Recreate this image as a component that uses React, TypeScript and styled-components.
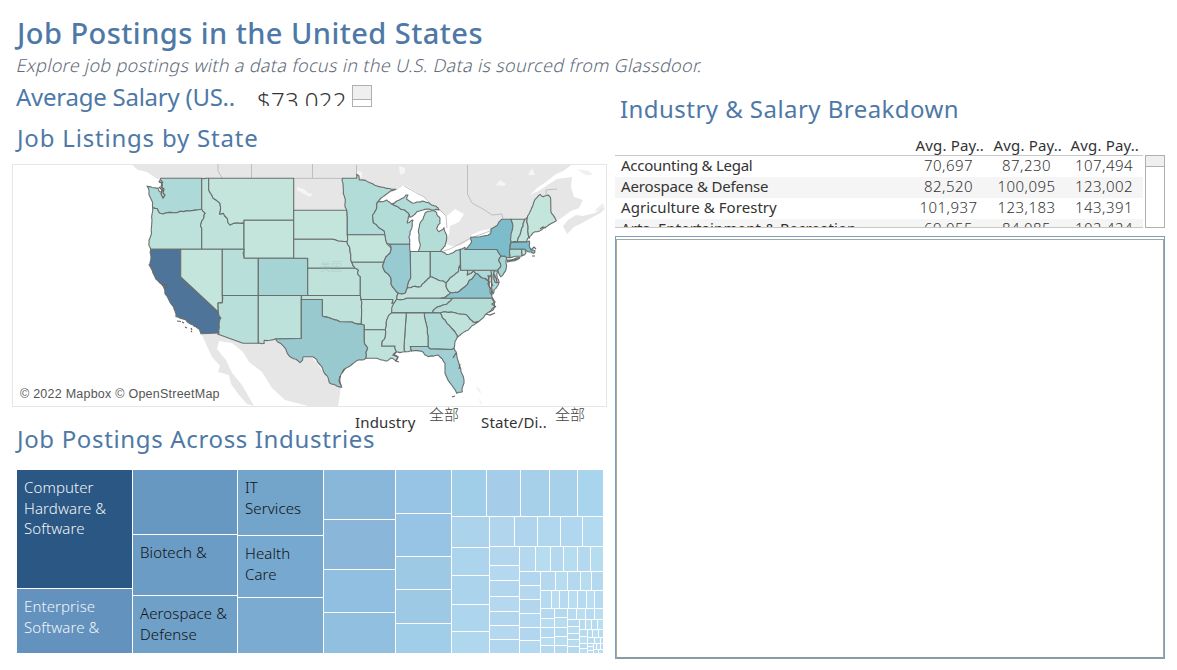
import React from "react";
import styled, { createGlobalStyle } from "styled-components";

const Global = createGlobalStyle`
  * { box-sizing: border-box; }
  body { margin: 0; background: #fff; overflow: hidden; font-family: "Noto Sans", "Noto Sans CJK SC", sans-serif; }
`;

const Page = styled.main`
  width: 1177px;
  height: 670px;
  overflow: hidden;
  background: #fff;
`;
const Columns = styled.div`
  display: grid;
  grid-template-columns: 595px 550px;
  column-gap: 8px;
  padding-left: 12px;
`;
const Header = styled.header`
  height: 81px;
  padding: 13px 0 0 17px;
`;
const PageTitle = styled.h1`
  margin: 0;
  font-size: 29px;
  line-height: 40px;
  font-weight: 500;
  letter-spacing: 0.45px;
  color: #4e79a7;
  white-space: nowrap;
`;
const Subtitle = styled.p`
  width: max-content;
  margin: 0;
  font-size: 18px;
  line-height: 24px;
  font-weight: 300;
  transform: skewX(-13deg);
  color: #5f6b78;
  letter-spacing: 0.32px;
  white-space: nowrap;
`;
const SectionTitle = styled.h2<{ $spacing?: number }>`
  margin: 0;
  font-size: 24px;
  line-height: 32px;
  font-weight: 450;
  letter-spacing: ${(p) => p.$spacing ?? 0.3}px;
  color: #4e79a7;
  white-space: nowrap;
`;
const Left = styled.section`
  display: flex;
  flex-direction: column;
`;
const SalaryRow = styled.div`
  display: flex;
  height: 41px;
  padding-left: 4px;
`;
const SalaryLabel = styled.div`
  width: 241px;
`;
const SalaryValue = styled.div`
  width: 95px;
  height: 25px;
  padding-top: 9px;
  overflow: hidden;
  font-size: 24px;
  line-height: 22px;
  font-weight: 300;
  letter-spacing: 0.3px;
  color: #333;
  white-space: nowrap;
`;
const ScrollSlot = styled.div`
  padding-top: 4px;
`;
const ScrollTrack = styled.div<{ $w: number; $h: number; $thumb: number }>`
  width: ${(p) => p.$w}px;
  height: ${(p) => p.$h}px;
  border: 1px solid #b0b0b0;
  &::before {
    content: "";
    display: block;
    height: ${(p) => p.$thumb}px;
    background: #efefef;
    border-bottom: 1px solid #b0b0b0;
  }
`;
const TitleSlot = styled.div<{ $h: number }>`
  height: ${(p) => p.$h}px;
  padding-left: 5px;
`;
const MapFrame = styled.div`
  position: relative;
  height: 243px;
  border: 1px solid #e6e6e6;
  svg { display: block; margin: -1px; }
`;
const Attribution = styled.div`
  position: absolute;
  left: 3px;
  bottom: 3px;
  padding: 0 4px;
  font: 12.5px/17px "Liberation Sans", sans-serif;
  color: #555;
  letter-spacing: 0.24px;
  background: rgba(255, 255, 255, 0.75);
`;
const Filters = styled.div`
  display: flex;
  height: 32px;
  margin-bottom: -16px;
  padding-left: 343px;
  color: #333;
`;
const FilterName = styled.div<{ $w: number }>`
  width: ${(p) => p.$w}px;
  padding-top: 4px;
  font-size: 15px;
  font-weight: 450;
  line-height: 22px;
  letter-spacing: 0.15px;
  white-space: nowrap;
`;
const FilterValue = styled.div`
  width: 51px;
  margin-left: -1px;
  padding-right: 1px;
  font: 300 15px/13px "Noto Sans CJK SC", sans-serif;
  color: #444;
  & + div { margin-left: 1px; }
`;
const TreeFrame = styled.div`
  display: flex;
  width: 586px;
  height: 183px;
  margin-left: 5px;
`;
const Split = styled.div<{ $dir: "row" | "column"; $size?: number }>`
  display: flex;
  flex-direction: ${(p) => p.$dir};
  gap: 1px;
  min-width: 0;
  min-height: 0;
  flex: ${(p) => (p.$size ? `0 0 ${p.$size}px` : "1 1 0")};
`;
const Cell = styled.div<{ $size: number; $color: string; $ink?: string }>`
  flex: 0 0 ${(p) => p.$size}px;
  min-width: 0;
  min-height: 0;
  overflow: hidden;
  background: ${(p) => p.$color};
  color: ${(p) => p.$ink ?? "#111"};
  font-size: 15px;
  font-weight: 350;
  line-height: 20.7px;
  letter-spacing: 0.1px;
  white-space: pre;
`;
const CellText = styled.div`
  padding: 7px 0 0 7px;
`;
const Right = styled.section`
  display: flex;
  flex-direction: column;
  padding-top: 12px;
`;
const Columned = styled.div`
  display: grid;
  grid-template-columns: 294px 78px 78px 77px;
`;
const TableHead = styled(Columned)`
  height: 30px;
  padding-top: 10px;
  font-size: 15px;
  font-weight: 450;
  line-height: 20px;
  letter-spacing: 0.15px;
  color: #333;
  text-align: right;
  span { padding-right: 3px; }
`;
const TableWrap = styled.div`
  display: flex;
  justify-content: space-between;
  height: 73px;
`;
const TableBody = styled.div`
  width: 528px;
  height: 73px;
  overflow: hidden;
  border-top: 1px solid #c8c8c8;
  border-bottom: 1px solid #c8c8c8;
`;
const TableRow = styled(Columned)<{ $band: boolean }>`
  height: 21px;
  font-size: 15px;
  line-height: 18px;
  color: #333;
  background: ${(p) => (p.$band ? "#f5f5f5" : "#fff")};
`;
const NameCell = styled.div<{ $spacing: number }>`
  padding-left: 6px;
  font-weight: 450;
  letter-spacing: ${(p) => p.$spacing}px;
  white-space: nowrap;
`;
const NumCell = styled.div`
  text-align: center;
  padding-left: 1px;
  font-weight: 300;
  letter-spacing: 0.45px;
`;
const EmptyPanel = styled.div`
  height: 423px;
  margin-top: 8px;
  border: 1px solid #76a0c4;
  border-bottom-width: 2px;
  border-bottom-color: #8a9ba5;
  padding: 2px 0 0 0;
  &::before {
    content: "";
    display: block;
    height: 418px;
    border: 1px solid #a9a79c;
    border-bottom: 0;
  }
`;

type Node = { s?: number; c?: string; t?: string; ink?: string; dir?: "row" | "column"; kids?: Node[] };
const cells = (sizes: number[], colors: string[]): Node[] =>
  sizes.map((s, i) => ({ s, c: colors[i % colors.length] }));
const row = (s: number | undefined, kids: Node[]): Node => ({ s, dir: "row", kids });
const col = (s: number | undefined, kids: Node[]): Node => ({ s, dir: "column", kids });
const A = ["#b1d6ee", "#b3d8ef"];
const B = ["#b4d9ef", "#b6dcf0"];
const C = ["#b6dbf1", "#b9def2"];

const tree: Node = row(undefined, [
  col(115, [
    { s: 118, c: "#2a5783", t: "Computer\nHardware &\nSoftware", ink: "#f2f5f8" },
    { s: 64, c: "#6292bd", t: "Enterprise\nSoftware &", ink: "#f2f5f8" },
  ]),
  col(104, [
    { s: 64, c: "#6798c2" },
    { s: 60, c: "#6b9cc5", t: "Biotech &" },
    { s: 57, c: "#6fa0c8", t: "Aerospace &\nDefense" },
  ]),
  col(85, [
    { s: 65, c: "#73a4ca", t: "IT\nServices" },
    { s: 61, c: "#77a8cf", t: "Health\nCare" },
    { s: 55, c: "#7babd1" },
  ]),
  col(71, [{ s: 49, c: "#88b7da" }, { s: 49, c: "#8ab6da" }, { s: 42, c: "#90bfe1" }, { s: 40, c: "#90bfe0" }]),
  col(55, [{ s: 43, c: "#97c4e4" }, { s: 42, c: "#97c4e4" }, { s: 32, c: "#9dc9e5" }, { s: 33, c: "#9ec9e4" }, { s: 29, c: "#a0cde8" }]),
  col(undefined, [
    row(46, [{ s: 34, c: "#a0cde8" }, { s: 33, c: "#a5cdea" }, { s: 28, c: "#a6d0ea" }, { s: 27, c: "#a7d0eb" }, { s: 25, c: "#a9d4ed" }]),
    row(undefined, [
      col(37, cells([30, 27, 28, 26, 21], ["#abd3ec", "#acd4ec", "#abd3ec", "#add5ed", "#afd7ee"])),
      col(undefined, [
        row(29, cells([24, 22, 22, 21, 20], ["#b0d5ec", "#afd5ee", "#b0d7ed", "#b0d7ef", "#b1d9ef"])),
        row(undefined, [
          col(29, cells([18, 14, 15, 14, 13, 13, 13], A)),
          col(undefined, [
            row(24, cells([15, 14, 12, 13, 12, 12], B)),
            row(undefined, [
              col(20, cells([13, 13, 13, 13, 12, 12], A)),
              col(undefined, [
                row(18, cells([14, 11, 12, 10, 11], B)),
                row(17, cells([10, 7, 8, 8, 8, 7, 8], C)),
                row(undefined, [
                  col(13, cells([9, 8, 9, 7, 7], B)),
                  col(12, cells([8, 9, 8, 8, 7], B)),
                  col(undefined, [
                    row(10, cells([8, 8, 8, 8], C)),
                    row(undefined, [
                      col(11, cells([6, 6, 5, 6, 6], B)),
                      col(undefined, [
                        row(9, cells([5, 5, 5, 5], C)),
                        row(undefined, [
                          col(7, cells([6, 6, 4, 4], C)),
                          col(undefined, [
                            row(7, cells([4, 5, 4], C)),
                            row(5, cells([6, 5, 2], C)),
                            row(undefined, [
                              col(5, cells([2, 3, 2], C)),
                              col(undefined, [row(5, cells([2, 3, 2], C)), row(3, cells([4, 4], C))]),
                            ]),
                          ]),
                        ]),
                      ]),
                    ]),
                  ]),
                ]),
              ]),
            ]),
          ]),
        ]),
      ]),
    ]),
  ]),
]);

function Tile({ node }: { node: Node }) {
  if (node.kids)
    return (
      <Split $dir={node.dir!} $size={node.s}>
        {node.kids.map((k, i) => (
          <Tile key={i} node={k} />
        ))}
      </Split>
    );
  return (
    <Cell $size={node.s!} $color={node.c!} $ink={node.ink}>
      {node.t && <CellText>{node.t}</CellText>}
    </Cell>
  );
}

type Pt = [number, number];
const parse = (s: string): Pt[] => s.trim().split(/\s+/).map((p) => p.split(",").map(Number) as Pt);
const hash = (n: number) => {
  const v = Math.sin(n * 12.9898) * 43758.5453;
  return v - Math.floor(v) - 0.5;
};

// Breaks short slanted edges into small steps so rivers and coasts look irregular.
// The offset depends only on the edge's midpoint, so neighbouring states agree.
function rough(a: Pt, b: Pt, depth: number): Pt[] {
  const dx = b[0] - a[0];
  const dy = b[1] - a[1];
  const len = Math.hypot(dx, dy);
  const straight = Math.abs(dx) < 0.4 || Math.abs(dy) < 0.7;
  if (!depth || len < 2.6 || len > 22 || (straight && len > 9)) return [b];
  const mx = (a[0] + b[0]) / 2;
  const my = (a[1] + b[1]) / 2;
  const k = Math.min(2.2, len * 0.24);
  const m: Pt = [mx + hash(mx * 3 + my * 7) * k, my + hash(mx * 5 + my * 11) * k];
  return [...rough(a, m, depth - 1), ...rough(m, b, depth - 1)];
}
function outline(s: string) {
  const pts = parse(s);
  const out: Pt[] = [pts[0]];
  pts.forEach((p, i) => out.push(...rough(p, pts[(i + 1) % pts.length], 2)));
  return "M" + out.map((p) => p[0].toFixed(1) + "," + p[1].toFixed(1)).join("L") + "Z";
}

const states: [string, string][] = [
  ["#add9d8", "160.7,178.3 201.7,178.3 201.7,209.3 186.7,210.7 173,212.7 163,214 160,213.3 157,208.5 152.7,207.7 151,199 149,195 147,186 152,187.5 158,188 160,192 163,190 162,184 159,181.5"],
  ["#bde1db", "152.7,207.7 157,208.5 160,213.3 163,214 173,212.7 186.7,210.7 201.7,209.3 205.3,213.3 203.3,219 200.5,226 201.7,228 201.7,249.3 150.7,249.3 149,243 150,238 152,220"],
  ["#bfe2da", "201.7,178.3 208.7,178.3 208.7,190 211.7,195 220,203.3 219.5,214 223.3,213.3 230,225 240,223.3 244,223.3 244,249.3 201.7,249.3 201.7,228 200.5,226 203.3,219 205.3,213.3 201.7,209.3"],
  ["#c3e5dc", "208.7,178.3 293.7,178.3 293.7,220.3 244,220.3 244,223.3 240,223.3 230,225 223.3,213.3 219.5,214 220,203.3 211.7,195 208.7,190"],
  ["#c4e5dc", "244,220.3 293.7,220.3 293.7,258.3 244,258.3"],
  ["#4e7499", "150.7,249.3 180.7,249.3 180.7,277 218.3,312 221,318 219,325 219,333 201,333.7 199,329 193,325 186,320 176,316.7 175,311 172,305 165,294 164,288 160,283 153,273 149,265 151,257"],
  ["#c3e5dc", "180.7,249.3 222.3,249.3 222.3,303 218,303 218.3,312 180.7,277"],
  ["#b8dfd9", "222.3,249.3 244,249.3 244,258.3 258.3,258.3 258.3,295.5 222.3,295.5"],
  ["#b8dfd9", "222.3,295.5 258.3,295.5 258.3,343.3 243,343.3 217.5,334 219,333 219,325 221,318 218.3,312 218,303 222.3,303"],
  ["#a6d3d4", "258.3,258.3 307.7,258.3 307.7,295.5 258.3,295.5"],
  ["#bde1db", "258.3,295.5 301.3,295.5 301.3,338.5 275.5,339 264.3,340.3 264.3,343.3 258.3,343.3"],
  ["#c4e5dc", "293.7,210.3 346.7,210.3 347.3,216.7 347.3,234.7 347,241.7 338,241 333,239.3 293.7,239.3"],
  ["#c1e3db", "293.7,239.3 333,239.3 338,241 347,241.7 350,251.7 351.7,262.3 355,268.3 307.7,268.3 307.7,258.3 293.7,258.3"],
  ["#bfe2da", "307.7,268.3 355,268.3 358.3,270 357.5,273 360.3,276.7 360.3,295.5 307.7,295.5"],
  ["#bfe2da", "301.3,295.5 360.3,295.5 361,299.5 361.7,310 361.3,324 352,322 340,321.7 330,318 322.3,316 322.3,299.5 301.3,299.5"],
  ["#98c9cf", "301.3,299.5 322.3,299.5 322.3,316 330,318 340,321.7 352,322 361.3,324 364.3,325 364.3,340 367.7,348.3 366,358.3 358.3,360 350,366 343,370.7 340.7,375 340,381.7 341.7,387.3 336.7,386 329.3,382.7 325,374 319.3,364 312.7,356.7 303.3,356.7 300,362.7 290,356.7 286,349.3 275.5,339 301.3,338.5"],
  ["#b2dcd8", "342.3,178.3 356.7,178.3 356.7,174.3 359,176 359.3,180 370,182.7 381.7,187.3 391.7,189.3 396,189.3 386.7,194 377.3,202.3 376.7,208.3 372.7,215 373.3,222.7 384,230.7 384.7,234.7 347.3,234.7 347.3,216.7 346.7,210.3 345,206.7 344.5,197 343.3,190"],
  ["#c3e5dc", "347.3,234.7 384.7,234.7 386.7,243.3 391.3,248.3 390,253.3 386,256.7 384,262.3 351.7,262.3 350,251.7 347,241.7"],
  ["#bbe0da", "351.7,262.3 384,262.3 382.7,266 385,271.7 391,278.3 391,284 398.3,293.3 396.7,299.3 394,303.3 391.7,303.3 392.7,299.5 361,299.5 360.3,295.5 360.3,276.7 357.5,273 358.3,270 355,268.3"],
  ["#c3e5dc", "361,299.5 392.7,299.5 391.7,303.3 394,303.3 391.7,312.7 386.7,320 385.3,329.7 364.3,329.7 364.3,325 361.3,324 361.7,310"],
  ["#bfe2da", "364.3,329.7 385.3,329.7 385,338 381.7,346 395,346 396.7,351.7 394,354 398,357 396,361 391,358 386.7,361 381,360 376.7,358.3 366,358.3 367.7,348.3 364.3,340"],
  ["#b2dcd8", "377.3,202.3 386.7,200 391.7,204 405,210 409.3,215 407.3,223 413,220 410,231.7 409.5,244.3 389.3,244.3 386.7,243.3 384.7,234.7 384,230.7 373.3,222.7 372.7,215 376.7,208.3"],
  ["#b2dcd8", "391.7,204 399.3,200 406,195 408,195 406.7,199.3 411.7,202.7 418,202 425,201.7 431.7,205 436,206 439,210 431.7,210 423,210 416.7,211.7 410,217.3 409.3,215 405,210"],
  ["#b4ddd8", "425,213 431.7,210.7 436.7,212.7 440,218.3 440,223.3 436.7,228.3 439,231.7 444,227.7 446.7,238.3 445,246 440.7,251.3 430,251.5 418.3,251.5 420,243.3 418.3,231.7 420,223.3 423,219.3"],
  ["#98cad1", "389.3,244.3 410,244.3 410.3,251.5 410.7,278.3 407.3,288 405,293.3 398.3,293.3 391,284 391,278.3 385,271.7 382.7,266 384,262.3 386,256.7 390,253.3 391.3,248.3"],
  ["#bbe0da", "410.3,251.5 430.3,251.5 430.3,276.7 425,281.7 420,286.7 413,286.5 407.3,288 410.7,278.3"],
  ["#b2dcd8", "430.3,251.5 441.7,251.5 446.7,254.5 453,252.7 460.3,249.3 460.3,265 458.3,271.7 451.7,276.7 446,282.7 438,280 430.3,276.7"],
  ["#c1e3db", "407.3,288 413,286.5 420,286.7 425,281.7 430.3,276.7 438,280 446,282.7 446,286 450.7,292.7 441,298.3 406.7,298.3 396.7,299.3 398.3,293.3 405,293.3"],
  ["#b8dfd9", "396.7,299.3 406.7,298.3 452.7,298.3 450,301.5 443,305 433,310.7 433,312.9 391.7,312.9 394,303.3"],
  ["#c1e3db", "446,282.7 451.7,276.7 458.3,271.7 460.3,265 460.7,270.3 467.3,270.3 467.3,275 473.3,271 475.7,273.3 470,280 465,286.7 460,290.7 453.3,292.7 450.7,292.7 446,286"],
  ["#8cc4cd", "441,298.3 450.7,292.7 453.3,292.7 460,290.7 465,286.7 470,280 475.7,273.3 478.3,274.3 485,278.3 489.3,281.7 490,291.7 492.7,298.3"],
  ["#add9d8", "467.3,270.3 494.3,270.3 495.3,282.3 499,282.3 496.7,287 493,294 491.5,284 490.5,275 488.5,280 485,278.3 478.3,274.3 475.7,273.3 473.3,271 467.3,275"],
  ["#bfe2da", "494.3,270.3 497.5,271 497,276 499,282.3 495.3,282.3"],
  ["#acd8d8", "460.3,249.3 465,247.3 465,249.5 496.7,249.5 501,255.7 498.7,260 501,266 497.7,270.3 460.7,270.3"],
  ["#a6d5d6", "501,255.7 506.7,257.7 506,263.3 505,271.7 500.7,276.7 497.7,270.3 501,266 498.7,260"],
  ["#7cbccb", "465,249.5 471.7,241.7 470.7,237.3 480,236.7 490,234 491,229 501.7,219.3 511,219.3 512.3,230 511,242.7 510,249.3 510,257.7 506.7,257.7 501,255.7 496.7,249.5"],
  ["#7cbccb", "507.3,260 520,257.5 513,261 507.5,262"],
  ["#bfe2da", "511,219.3 525,219.3 521.7,228.3 517.3,241.7 511.3,242.3 512.3,230"],
  ["#c3e5dc", "525,219.3 527.3,217.3 528.7,237.3 526.7,241.7 517.3,241.7 521.7,228.3"],
  ["#c3e5dc", "527.3,217.3 531,210 534,201.7 540,194.3 543.3,196.7 548.3,195 550.7,199.3 550.9,211.7 556.3,220.7 551.7,223.3 543.3,228.3 535,231.7 529.3,238.3 528.7,237.3"],
  ["#7cbccb", "511,242.5 526.7,241.9 529.3,241 529.3,245 531,250 535,250.7 534,253.3 528.3,251.7 524.3,249.3 510,249.3"],
  ["#b4ddd8", "510,249.3 521.7,249.3 521.7,256 510,257.7"],
  ["#bfe2da", "521.7,249.3 525,249.3 526,253 521.7,256"],
  ["#b4ddd8", "452.7,298.3 492.7,298.3 495,306.7 490,311.7 485,315 478.3,321.7 473.3,322.3 466.7,315 455,312.7 445,311.7 440,313 433,312.9 433,310.7 443,305 450,301.5"],
  ["#bfe2da", "440,313 445,311.7 455,312.7 466.7,315 473.3,322.3 478.3,321.7 468.3,330 457.3,337.3 453.3,330 445,320"],
  ["#b0dad8", "424.3,312.9 440,313 445,320 453.3,330 457.3,337.3 454,348.3 451.7,349.5 430,348.9 428,346.5 428.3,341 427.3,333.3"],
  ["#bfe2da", "406.3,312.9 424.3,312.9 427.3,333.3 428.3,341 428,346.5 410.3,346.5 411.7,351 405,351.7 404,346.7"],
  ["#c1e3db", "391.7,312.9 406.3,312.9 404,346.7 405,351.7 396.7,351.7 395,346 381.7,346 385,338 385.3,329.7 386.7,320"],
  ["#a0cfd4", "410.3,346.5 428,346.5 430,348.9 451.7,349.5 454,348.3 456.7,355 460.7,368.3 464,380 462.3,391.7 456.7,393.3 451.7,385 445,373.3 445,363.3 438.3,355 428.3,356.7 423.3,352.3 411.7,351"],
];

function UsMap() {
  return (
    <svg width="595" height="243" viewBox="12 164 595 243">
      <g fill="#e6e6e6">
        <path d="M131,164H573L563,171L556,174L546,182L537,188L530,195L540,190L549,184L557,179L572,177L571,187L574,197L583,200L579,208L571,211L560,219L551,223L480,255L340,210V178H165L157,179L147,172L138,170Z" />
        <path d="M293,177H350V212H293Z" />
        <path d="M563,226L568,220L576,215L583,216L595,213L604,207L602,212L593,217L582,223L574,227L567,234Z" />
        <path d="M577,169L589,171L593,175L585,175Z" opacity=".6" />
        <path d="M594,211L603,203L605,210Z" opacity=".7" />
        <path d="M201,333L218,334L243,343H264V340H276L286,350L291,357L300,363L304,357H312L325,374L330,383L341,387L338,407H312L285,400L272,388L262,372L249,362L243,352L232,343L219,341L217,349L226,360L232,373L242,385L250,399L254,406L247,404L239,395L231,384L229,375L218,372L220,366L212,357L206,344Z" />
        <path d="M476,386l3,2l3,6l-4,-3ZM478,397l4,6l-1,2Z" opacity=".5" />
      </g>
      <g fill="#fff">
        <path d="M379,202L387,194L397,190L404,185L417,192L429,201L430,204L418,203L411,204L405,199L398,200L391,203L386,200Z" />
        <path d="M413,211L423,209L439,209L428,213L423,221L419,231L421,243L416,252L411,251L409,244V232L412,220L409,225L408,223Z" />
        <path d="M431,208L440,211L447,216L455,209L464,214L459,222L450,226L449,235L445,238L443,230L438,233L437,228L441,222L439,216Z" />
        <path d="M441,252L449,247L461,245L472,238L471,242L464,249L452,255L445,255Z" />
        <path d="M471,235L480,231L490,229L489,234L480,238L472,238Z" />
        <path d="M297,187l7,2l4,4l5,1l-3,3l-6,-3l-7,-4ZM399,166l6,2v5l-5,2ZM496,185l4,-5l6,4l-2,2ZM528,175l4,-7l3,7ZM357,171l5,1v5l-4,1Z" opacity=".6" />
      </g>
      <g fill="none" stroke="#b5b5b5" strokeWidth=".8">
        <path d="M218,164V171L222,178M251.5,164V178M312.5,164V178M356.5,165V178M293,178.4H343M467.5,165V194L472,203L483,209L492,215L502,214L503,219M546,195V190L557,189M404,186L424,197L430,203M439,209L446,216L447,228M440,252L450,249L471,238L490,231L492,228" />
      </g>
      <g stroke="#6a6e6c" strokeWidth="1.1" strokeLinejoin="round">
        {states.map(([fill, pts], i) => (
          <path key={i} fill={fill} d={outline(pts)} />
        ))}
      </g>
      <text x="320" y="271" fontSize="11" fill="#8fb3ab" opacity=".4" fontFamily="Noto Sans CJK SC" fontWeight="300">美国</text>
      <g fill="none" stroke="#666" strokeWidth="1.2">
        <path d="M159,182l3,1l-1,4l3,2l-1,4l2,2l-2,3l-2,-4l1,-4l-3,-3M161,180l2,3M177,321l4,0.5M182,322l2,1M185,327l2,1M191,328l1,2M191,331l1,1M488,275l1,5l-1,4l3,5l1,6M491,271l1,6l-1,5l2,4M494,274l2,4l1,4M492,299l3,3l-3,2l4,3M489,312l4,-2l2,-4M486,314l4,1l5,-2M396,352l-3,3l5,2l-2,4l3,1M340,376l-1,5l2,4M345,369l-3,4M456,353l-3,5M460,364l-1,5M452,397l3,-1M162,285l4,-1l1,3l-3,1M531,250l3,-3l2,2M532,256l3,0M508,261l9,-2M540,229l3,-2l3,1" />
      </g>
    </svg>
  );
}

const rows: { name: string; spacing: number; pay: string[] }[] = [
  { name: "Accounting & Legal", spacing: -0.25, pay: ["70,697", "87,230", "107,494"] },
  { name: "Aerospace & Defense", spacing: -0.15, pay: ["82,520", "100,095", "123,002"] },
  { name: "Agriculture & Forestry", spacing: 0.05, pay: ["101,937", "123,183", "143,391"] },
  { name: "Arts, Entertainment & Recreation", spacing: 0.1, pay: ["69,055", "84,085", "102,424"] },
];

export default function App() {
  return (
    <Page>
      <Global />
      <Header>
        <PageTitle>Job Postings in the United States</PageTitle>
        <Subtitle>Explore job postings with a data focus in the U.S. Data is sourced from Glassdoor.</Subtitle>
      </Header>
      <Columns>
        <Left>
          <SalaryRow>
            <SalaryLabel>
              <SectionTitle $spacing={-0.25}>Average Salary (US..</SectionTitle>
            </SalaryLabel>
            <SalaryValue>$73,022</SalaryValue>
            <ScrollSlot>
              <ScrollTrack $w={20} $h={22} $thumb={13} />
            </ScrollSlot>
          </SalaryRow>
          <TitleSlot $h={42}>
            <SectionTitle $spacing={0.8}>Job Listings by State</SectionTitle>
          </TitleSlot>
          <MapFrame>
            <UsMap />
            <Attribution>© 2022 Mapbox © OpenStreetMap</Attribution>
          </MapFrame>
          <Filters>
            <FilterName $w={75}>Industry</FilterName>
            <FilterValue>全部</FilterValue>
            <FilterName $w={75}>State/Di..</FilterName>
            <FilterValue>全部</FilterValue>
          </Filters>
          <TitleSlot $h={47}>
            <SectionTitle $spacing={0.65}>Job Postings Across Industries</SectionTitle>
          </TitleSlot>
          <TreeFrame>
            <Tile node={tree} />
          </TreeFrame>
        </Left>
        <Right>
          <TitleSlot $h={32}>
            <SectionTitle $spacing={0.45}>Industry &amp; Salary Breakdown</SectionTitle>
          </TitleSlot>
          <TableHead>
            <span />
            <span>Avg. Pay..</span>
            <span>Avg. Pay..</span>
            <span>Avg. Pay..</span>
          </TableHead>
          <TableWrap>
            <TableBody>
              {rows.map((r, i) => (
                <TableRow key={r.name} $band={i % 2 === 1}>
                  <NameCell $spacing={r.spacing}>{r.name}</NameCell>
                  {r.pay.map((v) => (
                    <NumCell key={v}>{v}</NumCell>
                  ))}
                </TableRow>
              ))}
            </TableBody>
            <ScrollTrack $w={20} $h={73} $thumb={10} />
          </TableWrap>
          <EmptyPanel />
        </Right>
      </Columns>
    </Page>
  );
}
